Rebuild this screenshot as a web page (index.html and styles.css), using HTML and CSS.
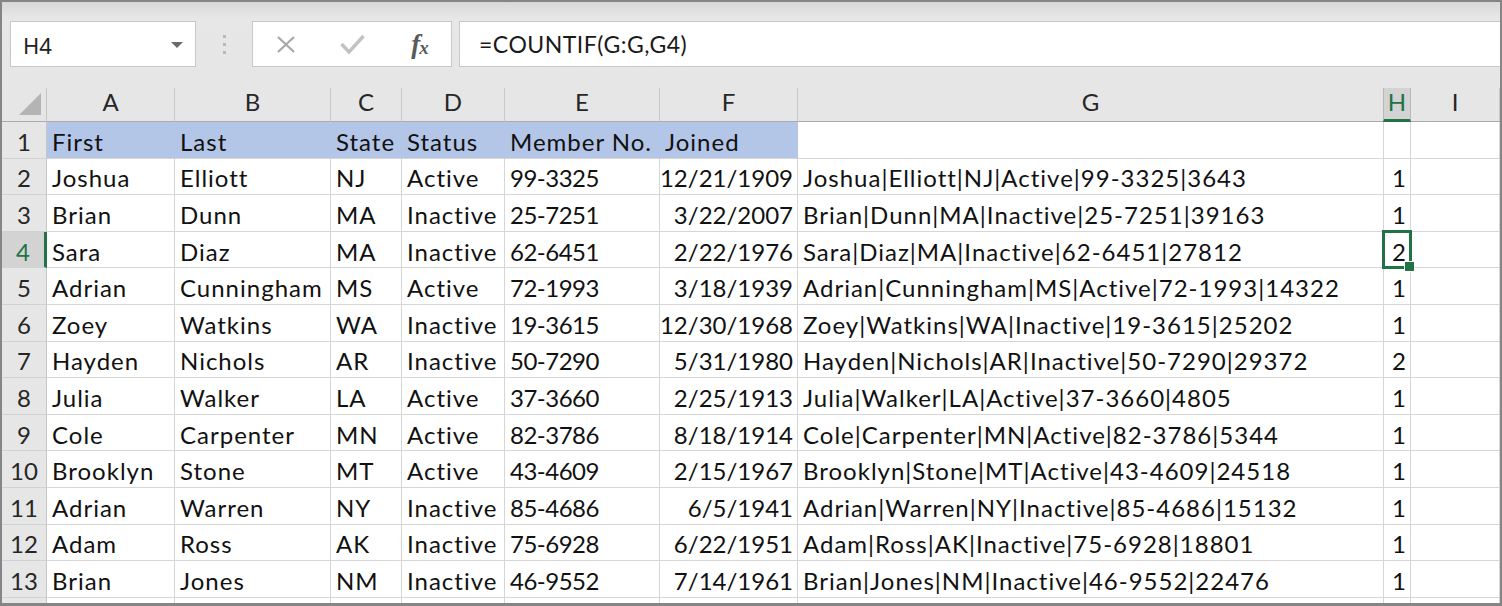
FILE: index.html
```html
<!DOCTYPE html>
<html>
<head>
<meta charset="utf-8">
<link rel="stylesheet" href="styles.css">
</head>
<body>
<div class="window">
  <div class="toolbar">
    <div class="namebox">
      <span class="nb-text">H4</span>
      <svg class="nb-arrow" width="12" height="6" viewBox="0 0 12 6"><path d="M0 0H12L6 6Z" fill="#6b6b6b"/></svg>
    </div>
    <div class="grip"><i></i><i></i><i></i></div>
    <div class="fbtns">
      <span class="fbtn"><svg width="20" height="17" viewBox="0 0 20 17"><path d="M2 1L18 16M18 1L2 16" stroke="#a8a8a8" stroke-width="2.2" fill="none"/></svg></span>
      <span class="fbtn"><svg width="25" height="21" viewBox="0 0 25 21"><path d="M1.5 10L9 18L23.5 2" stroke="#c2c2c2" stroke-width="3.4" fill="none"/></svg></span>
      <span class="fbtn fx">f<span class="fx-x">x</span></span>
    </div>
    <div class="formula">=COUNTIF(G:G,G4)</div>
  </div>
  <div class="sheet">
    <div class="corner"><svg width="22" height="22" viewBox="0 0 22 22"><path d="M22 0V22H0Z" fill="#b4b4b4"/></svg></div>
    <div class="ch">A</div><div class="ch">B</div><div class="ch">C</div><div class="ch">D</div><div class="ch">E</div><div class="ch">F</div><div class="ch">G</div><div class="ch act">H</div><div class="ch">I</div>

    <div class="rh">1</div><div class="c hd">First</div><div class="c hd">Last</div><div class="c hd">State</div><div class="c hd">Status</div><div class="c hd">Member No.</div><div class="c hd">Joined</div><div class="c"></div><div class="c"></div><div class="c"></div>

    <div class="rh">2</div><div class="c">Joshua</div><div class="c">Elliott</div><div class="c">NJ</div><div class="c">Active</div><div class="c n">99-3325</div><div class="c r">12/21/1909</div><div class="c">Joshua|Elliott|NJ|Active|99-3325|3643</div><div class="c r">1</div><div class="c"></div>

    <div class="rh">3</div><div class="c">Brian</div><div class="c">Dunn</div><div class="c">MA</div><div class="c">Inactive</div><div class="c n">25-7251</div><div class="c r">3/22/2007</div><div class="c">Brian|Dunn|MA|Inactive|25-7251|39163</div><div class="c r">1</div><div class="c"></div>

    <div class="rh act">4</div><div class="c">Sara</div><div class="c">Diaz</div><div class="c">MA</div><div class="c">Inactive</div><div class="c n">62-6451</div><div class="c r">2/22/1976</div><div class="c">Sara|Diaz|MA|Inactive|62-6451|27812</div><div class="c r sel">2</div><div class="c"></div>

    <div class="rh">5</div><div class="c">Adrian</div><div class="c">Cunningham</div><div class="c">MS</div><div class="c">Active</div><div class="c n">72-1993</div><div class="c r">3/18/1939</div><div class="c">Adrian|Cunningham|MS|Active|72-1993|14322</div><div class="c r">1</div><div class="c"></div>

    <div class="rh">6</div><div class="c">Zoey</div><div class="c">Watkins</div><div class="c">WA</div><div class="c">Inactive</div><div class="c n">19-3615</div><div class="c r">12/30/1968</div><div class="c">Zoey|Watkins|WA|Inactive|19-3615|25202</div><div class="c r">1</div><div class="c"></div>

    <div class="rh">7</div><div class="c">Hayden</div><div class="c">Nichols</div><div class="c">AR</div><div class="c">Inactive</div><div class="c n">50-7290</div><div class="c r">5/31/1980</div><div class="c">Hayden|Nichols|AR|Inactive|50-7290|29372</div><div class="c r">2</div><div class="c"></div>

    <div class="rh">8</div><div class="c">Julia</div><div class="c">Walker</div><div class="c">LA</div><div class="c">Active</div><div class="c n">37-3660</div><div class="c r">2/25/1913</div><div class="c">Julia|Walker|LA|Active|37-3660|4805</div><div class="c r">1</div><div class="c"></div>

    <div class="rh">9</div><div class="c">Cole</div><div class="c">Carpenter</div><div class="c">MN</div><div class="c">Active</div><div class="c n">82-3786</div><div class="c r">8/18/1914</div><div class="c">Cole|Carpenter|MN|Active|82-3786|5344</div><div class="c r">1</div><div class="c"></div>

    <div class="rh">10</div><div class="c">Brooklyn</div><div class="c">Stone</div><div class="c">MT</div><div class="c">Active</div><div class="c n">43-4609</div><div class="c r">2/15/1967</div><div class="c">Brooklyn|Stone|MT|Active|43-4609|24518</div><div class="c r">1</div><div class="c"></div>

    <div class="rh">11</div><div class="c">Adrian</div><div class="c">Warren</div><div class="c">NY</div><div class="c">Inactive</div><div class="c n">85-4686</div><div class="c r">6/5/1941</div><div class="c">Adrian|Warren|NY|Inactive|85-4686|15132</div><div class="c r">1</div><div class="c"></div>

    <div class="rh">12</div><div class="c">Adam</div><div class="c">Ross</div><div class="c">AK</div><div class="c">Inactive</div><div class="c n">75-6928</div><div class="c r">6/22/1951</div><div class="c">Adam|Ross|AK|Inactive|75-6928|18801</div><div class="c r">1</div><div class="c"></div>

    <div class="rh">13</div><div class="c">Brian</div><div class="c">Jones</div><div class="c">NM</div><div class="c">Inactive</div><div class="c n">46-9552</div><div class="c r">7/14/1961</div><div class="c">Brian|Jones|NM|Inactive|46-9552|22476</div><div class="c r">1</div><div class="c"></div>

    <div class="rh"></div><div class="c"></div><div class="c"></div><div class="c"></div><div class="c"></div><div class="c"></div><div class="c"></div><div class="c"></div><div class="c"></div><div class="c"></div>
  </div>
</div>
</body>
</html>
```

FILE: styles.css
```css
* { box-sizing: border-box; }

html, body {
  margin: 0;
  padding: 0;
  width: 1502px;
  height: 606px;
  overflow: hidden;
  background: #fff;
}

body {
  font-family: Lato, "Liberation Sans", sans-serif;
}

.window {
  width: 1502px;
  height: 606px;
  border: 2px solid #858585;
  border-bottom-width: 3px;
  background: #e6e6e6;
  overflow: hidden;
  display: flex;
  flex-direction: column;
}

/* ---------- formula bar ---------- */
.toolbar {
  flex: 0 0 86px;
  display: flex;
  align-items: flex-start;
  padding: 19px 0 0 8px;
  background: linear-gradient(#d8d8d8, #e7e7e7 16px, #e6e6e6);
}

.namebox {
  width: 186px;
  height: 46px;
  background: #fff;
  border: 1px solid #c8c8c8;
  display: flex;
  align-items: center;
  justify-content: space-between;
  padding: 0 12px 0 12px;
}

.nb-text {
  font-family: "Noto Sans", "Open Sans", sans-serif;
  font-size: 22px;
  color: #222;
  padding-top: 1px;
}

.nb-arrow { margin-top: 1px; }

.grip {
  width: 56px;
  height: 46px;
  display: flex;
  flex-direction: column;
  align-items: center;
  justify-content: center;
  gap: 5px;
}

.grip i {
  display: block;
  width: 3px;
  height: 3px;
  background: #b9b9b9;
}

.fbtns {
  width: 200px;
  height: 46px;
  background: #fff;
  border: 1px solid #c8c8c8;
  display: flex;
  align-items: center;
  justify-content: space-around;
}

.fbtn {
  width: 40px;
  display: flex;
  align-items: center;
  justify-content: center;
}

.fx {
  font-family: "Liberation Serif", "DejaVu Serif", serif;
  font-style: italic;
  font-weight: bold;
  font-size: 27px;
  color: #5a5a5a;
  line-height: 1;
  align-items: baseline;
  padding-left: 4px;
}

.fx-x {
  font-size: 19px;
  margin-left: -1px;
  position: relative;
  top: 1px;
}

.formula {
  flex: 1;
  height: 46px;
  margin-left: 7px;
  background: #fff;
  border: 1px solid #c8c8c8;
  border-right: none;
  display: flex;
  align-items: center;
  padding-left: 19px;
  font-size: 23px;
  letter-spacing: 0.5px;
  color: #1a1a1a;
}

/* ---------- sheet ---------- */
.sheet {
  flex: 1;
  display: grid;
  grid-template-columns: 45px 128px 156px 71px 103px 155px 138px 586px 27px 1fr;
  grid-template-rows: 34px;
  grid-auto-rows: 36.6px;
  background: #fff;
  font-size: 24px;
  color: #111;
}

.corner {
  background: #e6e6e6;
  border-right: 1px solid #c6c6c6;
  border-bottom: 1px solid #ababab;
  display: flex;
  align-items: flex-end;
  justify-content: flex-end;
  padding: 0 5px 6px 0;
}

.ch {
  background: #e6e6e6;
  border-right: 1px solid #c9c9c9;
  border-bottom: 1px solid #ababab;
  display: flex;
  align-items: flex-end;
  justify-content: center;
  padding-bottom: 4px;
  color: #262626;
  line-height: 1.2;
}

.ch.act {
  background: #d3d3d3;
  color: #217346;
  border-left: 1px solid #b8b8b8;
  border-right-color: #b8b8b8;
  border-bottom: 3px solid #217346;
  margin-left: -1px;
  padding-bottom: 2px;
}

.rh {
  background: #e6e6e6;
  border-right: 1px solid #c6c6c6;
  border-bottom: 1px solid #d2d2d2;
  display: flex;
  align-items: flex-end;
  justify-content: center;
  padding-bottom: 1px;
  color: #262626;
  line-height: 1.2;
}

.rh.act {
  background: #d3d3d3;
  color: #217346;
  border-right: 3px solid #217346;
}

.c {
  border-right: 1px solid #d6d6d6;
  border-bottom: 1px solid #d6d6d6;
  display: flex;
  align-items: flex-end;
  padding: 0 5px 1px 5px;
  white-space: nowrap;
  line-height: 1.2;
  letter-spacing: 1px;
  min-width: 0;
}

.c.n { letter-spacing: -0.5px; }

.c.r {
  justify-content: flex-end;
  padding-right: 4px;
  letter-spacing: 0;
}

.c.hd {
  background: #b4c6e7;
  border-right-color: #b4c6e7;
}

.c.sel { position: relative; }

.c.sel::after {
  content: "";
  position: absolute;
  left: -2px;
  top: -2px;
  right: -2px;
  bottom: -2px;
  border: 3px solid #217346;
}

.c.sel::before {
  content: "";
  position: absolute;
  right: -5px;
  bottom: -5px;
  width: 9px;
  height: 9px;
  background: #217346;
  border: 1px solid #fff;
  z-index: 2;
}
```
